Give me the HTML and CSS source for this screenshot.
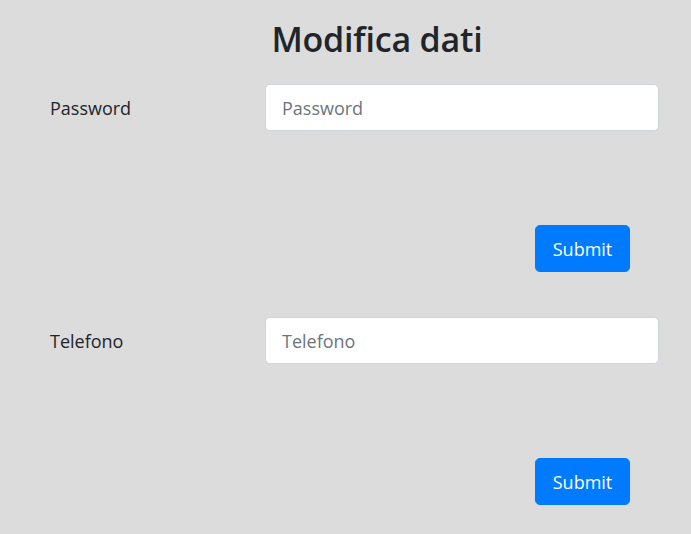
FILE: index.html
```html
<!DOCTYPE html>
<html lang="it">
<head>
<meta charset="utf-8">
<title>Modifica dati</title>
<link rel="stylesheet" href="styles.css">
</head>
<body>
<main class="page">
  <h2 class="title">Modifica dati</h2>
  <form class="section">
    <div class="row">
      <label class="label" for="pw">Password</label>
      <input class="field" id="pw" type="password" placeholder="Password">
    </div>
    <div class="actions">
      <button class="btn" type="button">Submit</button>
    </div>
  </form>
  <form class="section">
    <div class="row">
      <label class="label" for="tel">Telefono</label>
      <input class="field" id="tel" type="text" placeholder="Telefono">
    </div>
    <div class="actions">
      <button class="btn" type="button">Submit</button>
    </div>
  </form>
</main>
</body>
</html>
```

FILE: styles.css
```css
* { box-sizing: border-box; }
html, body {
  margin: 0;
  background: #dcdcdc;
  color: #212529;
  font-family: "Open Sans", "Noto Sans", "Liberation Sans", sans-serif;
}
.page {
  width: 691px;
  height: 534px;
  padding: 0 33px 0 50px;
  overflow: hidden;
}
.title {
  margin: 0;
  height: 84px;
  padding-top: 19px;
  padding-left: 46px;
  font-size: 34px;
  font-weight: 600;
  line-height: 40px;
  text-align: center;
  letter-spacing: -0.2px;
}
.section {
  margin: 0 0 45px;
}
.row {
  display: flex;
  align-items: center;
  height: 47px;
}
.label {
  width: 215px;
  font-size: 18px;
}
.field {
  flex: 1;
  height: 47px;
  margin-right: -1px;
  padding: 0 16px;
  border: 1px solid #ced4da;
  border-radius: 4.8px;
  background: #fff;
  font: inherit;
  font-size: 18px;
  color: #495057;
}
.field::placeholder { color: #6c757d; }
.actions {
  display: flex;
  justify-content: flex-end;
  margin-top: 94px;
  padding-right: 28px;
}
.btn {
  width: 95px;
  height: 47px;
  border: 1px solid #007bff;
  border-radius: 4.8px;
  background: #007bff;
  color: #fff;
  font: inherit;
  font-size: 18px;
  padding: 0;
}
```
